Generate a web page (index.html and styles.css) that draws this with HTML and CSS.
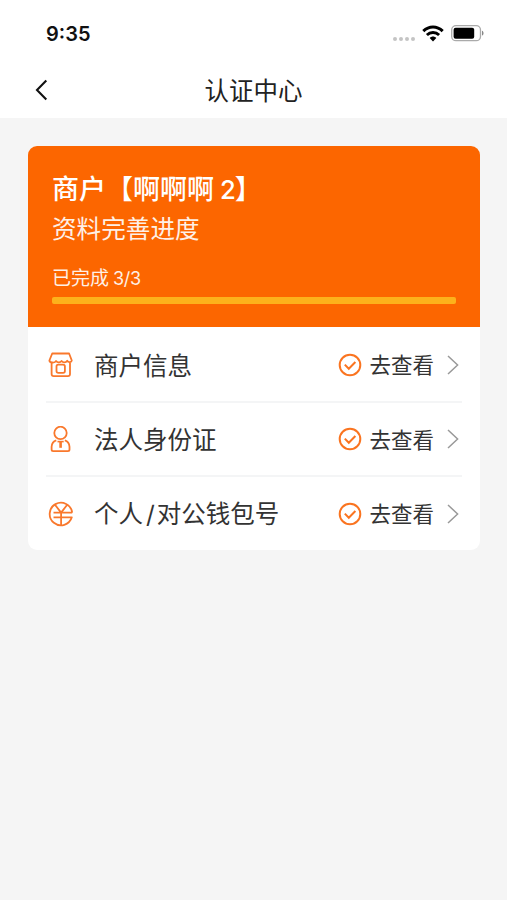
FILE: index.html
```html
<!DOCTYPE html>
<html lang="zh-CN">
<head>
    <meta charset="UTF-8">
    <meta name="viewport" content="width=device-width, initial-scale=1.0">
    <title>认证中心</title>
    <link rel="stylesheet" href="styles.css">
</head>
<body>
    <header>
        <div class="status-bar">
            <span class="time">9:35</span>
            <div class="status-icons">
                <div class="dots"><i></i><i></i><i></i><i></i></div>
                <svg class="wifi" width="22" height="17" viewBox="0 0 22 17">
                    <path d="M1.3 6.1C7 .6 15 .6 20.7 6.1" fill="none" stroke="#000" stroke-width="3"/>
                    <path d="M4.9 10.1c3.4-3.5 8.8-3.5 12.2 0" fill="none" stroke="#000" stroke-width="2.8"/>
                    <path d="M7.7 13.1c1.9-2 4.7-2 6.6 0L11 16.4z"/>
                </svg>
                <svg class="battery" width="34" height="17" viewBox="0 0 34 17">
                    <rect x=".7" y=".7" width="28.8" height="15" rx="4.3" fill="none" stroke="#aaa" stroke-width="1.3"/>
                    <rect x="2.6" y="2.7" width="20.6" height="11" rx="2"/>
                    <path d="M31 5.8c2 .6 2 4.2 0 4.8z" fill="#888"/>
                </svg>
            </div>
        </div>
        <nav class="nav-bar">
            <svg class="back" width="14" height="22" viewBox="0 0 14 22">
                <path d="M12.3 1.6L3 11l9.3 9.4" fill="none" stroke="#111" stroke-width="2.1"/>
            </svg>
            <h1>认证中心</h1>
        </nav>
    </header>

    <main class="card">
        <section class="progress-panel">
            <h2>商户【啊啊啊<span class="num">2</span>】</h2>
            <p class="subtitle">资料完善进度</p>
            <p class="done">已完成<span class="num">3/3</span></p>
            <div class="progress"><div class="progress-bar"></div></div>
        </section>

        <ul class="list">
            <li>
                <svg class="item-icon" width="26" height="26" viewBox="0 0 26 26">
                    <path d="M4.2 1.5h16.9l2.7 7c-.2 2-3.6 2.4-4.6.2-1.3 2.2-4.3 2.2-5.6.3-1.3 1.9-4.3 1.9-5.6 0-1 2.2-6.2 2-6.6-.5z"/>
                    <path d="M3.6 10.5v11.6c0 1.4.7 2.1 2.1 2.1h14.2c1.4 0 2.1-.7 2.1-2.1V10.5"/>
                    <rect x="8.5" y="12.7" width="8.4" height="8.2" rx="1.8"/>
                </svg>
                <span class="label">商户信息</span>
                <svg class="check" width="24" height="24" viewBox="0 0 24 24">
                    <circle cx="12" cy="12" r="10.3"/>
                    <path d="M6.8 11.6l4 4.1 6.6-6.7"/>
                </svg>
                <span class="link">去查看</span>
                <svg class="arrow" width="12" height="20" viewBox="0 0 12 20"><path d="M1 1l9.6 9L1 19"/></svg>
            </li>
            <li>
                <svg class="item-icon" width="26" height="26" viewBox="0 0 26 26">
                    <circle cx="12.5" cy="6.9" r="6.2"/>
                    <path d="M8.3 14.4c-2.7.8-4.5 3.3-4.7 6.3v2.8c0 1 .5 1.6 1.6 1.6h14.7c1.1 0 1.6-.6 1.6-1.6v-2.8c-.2-3-2-5.5-4.7-6.3"/>
                    <path d="M9.5 15.6h6.2" stroke-width="1.6"/>
                    <path d="M12.6 16v5.8" stroke-width="2.6"/>
                </svg>
                <span class="label">法人身份证</span>
                <svg class="check" width="24" height="24" viewBox="0 0 24 24">
                    <circle cx="12" cy="12" r="10.3"/>
                    <path d="M6.8 11.6l4 4.1 6.6-6.7"/>
                </svg>
                <span class="link">去查看</span>
                <svg class="arrow" width="12" height="20" viewBox="0 0 12 20"><path d="M1 1l9.6 9L1 19"/></svg>
            </li>
            <li>
                <svg class="item-icon" width="26" height="26" viewBox="0 0 26 26">
                    <path d="M24.2 11.6A11.3 11.3 0 1 0 23.8 16.3H5.5"/>
                    <path d="M7 3.8l6.1 7.8 6.1-7.8M13.1 11.6v12.5M5.5 11.6h18.7"/>
                </svg>
                <span class="label">个人<span class="slash">/</span>对公钱包号</span>
                <svg class="check" width="24" height="24" viewBox="0 0 24 24">
                    <circle cx="12" cy="12" r="10.3"/>
                    <path d="M6.8 11.6l4 4.1 6.6-6.7"/>
                </svg>
                <span class="link">去查看</span>
                <svg class="arrow" width="12" height="20" viewBox="0 0 12 20"><path d="M1 1l9.6 9L1 19"/></svg>
            </li>
        </ul>
    </main>
</body>
</html>
```
FILE: styles.css
```css
* {
    box-sizing: border-box;
    margin: 0;
    padding: 0;
}

body {
    font-family: 'Noto Sans CJK SC', sans-serif;
    background-color: #f5f5f5;
    color: #333;
}

header {
    height: 118px;
    background-color: #fff;
}

.status-bar {
    display: flex;
    align-items: center;
    justify-content: space-between;
    height: 62px;
    padding: 5px 22px 0 46px;
}

.time {
    font-family: Inter, sans-serif;
    font-size: 20px;
    font-weight: 600;
    line-height: 24px;
    color: #111;
}

.status-icons {
    display: flex;
    align-items: center;
}

.dots {
    display: flex;
    gap: 2px;
    margin: 10px 7px 0 0;
}

.dots i {
    width: 4px;
    height: 4px;
    border-radius: 50%;
    background-color: #c4c4c4;
}

.battery {
    margin-left: 7px;
}

.nav-bar {
    display: grid;
    grid-template-columns: 60px 1fr 60px;
    align-items: center;
    height: 56px;
}

.back {
    margin-left: 34px;
}

.nav-bar h1 {
    font-size: 24.5px;
    font-weight: 400;
    line-height: 36px;
    text-align: center;
    color: #222;
}

.card {
    margin: 28px 27px 0 28px;
    border-radius: 9px;
    background-color: #fff;
    overflow: hidden;
}

.progress-panel {
    height: 181px;
    padding: 22px 24px 0;
    background-color: #fc6600;
    color: #fff;
}

.progress-panel h2 {
    font-size: 27px;
    font-weight: 500;
    line-height: 40px;
}

.num {
    margin-left: 4px;
    font-family: Inter, sans-serif;
    font-size: 0.95em;
}

h2 .num {
    margin-left: 6px;
    font-weight: 500;
    letter-spacing: -1px;
}

.subtitle {
    font-size: 24.6px;
    line-height: 34px;
    opacity: 0.9;
}

.done {
    margin-top: 18px;
    font-size: 19px;
    line-height: 30px;
    opacity: 0.9;
}

.done .num {
    letter-spacing: -0.3px;
}

.progress {
    height: 7px;
    margin-top: 7px;
    border-radius: 2px;
    background-color: #fff;
    overflow: hidden;
}

.done + .progress {
    margin-top: 3px;
}

.progress-bar {
    width: 100%;
    height: 100%;
    background-color: #fdb11b;
}

.list {
    padding: 0 18px;
    list-style: none;
}

.list li {
    display: flex;
    align-items: center;
    height: 76px;
    padding: 1px 3px 0 0;
    border-bottom: 2px solid #f4f5f6;
}

.list li + li {
    height: 74px;
    padding-top: 0;
}

.list li:last-child {
    height: 73px;
    border-bottom: none;
}

.item-icon {
    margin-left: 2px;
    fill: none;
    stroke: #f9782c;
    stroke-width: 1.8;
    stroke-linejoin: round;
}

.label {
    flex: 1;
    margin-left: 20px;
    font-size: 24.5px;
    line-height: 36px;
}

.slash {
    margin: 0 2px 0 3px;
    font-family: Inter, sans-serif;
}

.check {
    fill: none;
    stroke: #fa7420;
    stroke-width: 2;
}

.link {
    margin: 0 13px 1px 7px;
    font-size: 21.5px;
    line-height: 32px;
}

.arrow {
    fill: none;
    stroke: #999;
    stroke-width: 1.5;
}
```
